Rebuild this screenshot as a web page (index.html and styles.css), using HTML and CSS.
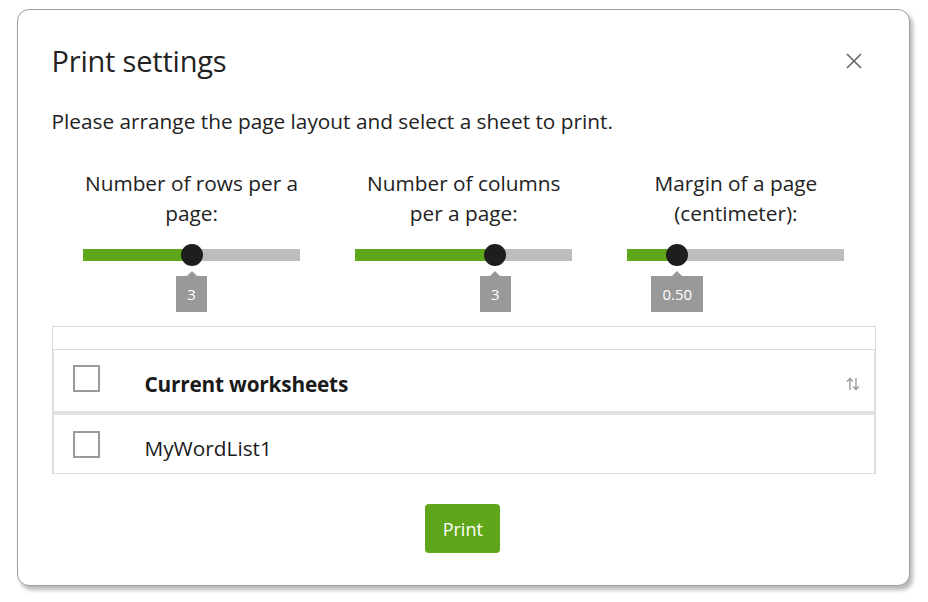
FILE: index.html
```html
<!DOCTYPE html>
<html lang="en">
<head>
<meta charset="utf-8">
<title>Print settings</title>
<link rel="stylesheet" href="styles.css">
</head>
<body>
<div class="dialog">
  <div class="header">
    <h1 class="title">Print settings</h1>
    <button class="close" aria-label="Close">
      <svg width="16" height="16" viewBox="0 0 16 16"><path d="M1 1L15 15M15 1L1 15" stroke="#666" stroke-width="1.6" fill="none"/></svg>
    </button>
  </div>
  <p class="desc">Please arrange the page layout and select a sheet to print.</p>
  <div class="sliders">
    <div class="slider-col">
      <div class="label">Number of rows per a<br>page:</div>
      <div class="track">
        <div class="fill" style="width:50%"></div>
        <div class="thumb-wrap" style="left:50%">
          <div class="thumb"></div>
          <div class="tip">3</div>
        </div>
      </div>
    </div>
    <div class="slider-col">
      <div class="label">Number of columns<br>per a page:</div>
      <div class="track">
        <div class="fill" style="width:64.5%"></div>
        <div class="thumb-wrap" style="left:64.5%">
          <div class="thumb"></div>
          <div class="tip">3</div>
        </div>
      </div>
    </div>
    <div class="slider-col">
      <div class="label">Margin of a page<br>(centimeter):</div>
      <div class="track">
        <div class="fill" style="width:23%"></div>
        <div class="thumb-wrap" style="left:23%">
          <div class="thumb"></div>
          <div class="tip">0.50</div>
        </div>
      </div>
    </div>
  </div>
  <div class="grid">
    <div class="toolbar"></div>
    <div class="row head">
      <div class="cell-check"><span class="checkbox"></span></div>
      <div class="cell-name">Current worksheets</div>
      <div class="cell-sort">
        <svg width="14" height="14" viewBox="0 0 14 14"><path d="M4 13V1.5M1 4.5L4 1.5L7 4.5M10 1V12.5M7 9.5L10 12.5L13 9.5" stroke="#9a9a9a" stroke-width="1.4" fill="none"/></svg>
      </div>
    </div>
    <div class="sep"></div>
    <div class="row">
      <div class="cell-check"><span class="checkbox"></span></div>
      <div class="cell-name normal">MyWordList1</div>
    </div>
  </div>
  <div class="footer">
    <button class="print">Print</button>
  </div>
</div>
</body>
</html>
```

FILE: styles.css
```css
* { box-sizing: border-box; }
html, body { margin: 0; padding: 0; background: #fff; }
body {
  font-family: "Open Sans", "Noto Sans", sans-serif;
  color: #222;
  width: 928px;
  height: 602px;
  overflow: hidden;
}
.dialog {
  margin: 9px 0 0 17px;
  width: 893px;
  height: 577px;
  border: 1.5px solid #9e9e9e;
  border-radius: 12px;
  background: #fff;
  box-shadow: 3px 4px 4px rgba(0,0,0,0.28);
  padding: 30px 33px 0 33.5px;
}
.header {
  display: flex;
  justify-content: space-between;
  align-items: center;
  height: 42px;
}
.title {
  margin: 0;
  font-size: 29px;
  font-weight: 400;
  line-height: 42px;
  letter-spacing: -0.2px;
  color: #222;
}
.close {
  border: 0;
  background: none;
  padding: 0;
  width: 16px;
  height: 16px;
  margin-right: 14px;
  display: flex;
}
.desc {
  margin: 25px 0 0 0;
  font-size: 20.8px;
  line-height: 28px;
  color: #222;
}
.sliders {
  display: grid;
  grid-template-columns: repeat(3, 1fr);
  margin-top: 33px;
  padding: 0 4px;
}
.slider-col {
  display: flex;
  flex-direction: column;
  align-items: center;
}
.label {
  text-align: center;
  font-size: 20.8px;
  line-height: 30px;
  color: #222;
}
.track {
  position: relative;
  width: 217px;
  height: 12px;
  background: #bdbdbd;
  margin-top: 21px;
  margin-bottom: 65px;
}
.fill {
  height: 100%;
  background: #5fa61a;
}
.thumb-wrap {
  position: absolute;
  top: -5px;
  width: 0;
  display: flex;
  flex-direction: column;
  align-items: center;
}
.thumb {
  width: 22px;
  height: 22px;
  border-radius: 50%;
  background: #1e1e1e;
  flex: none;
}
.tip {
  position: relative;
  margin-top: 10px;
  background: #999;
  color: #fff;
  font-size: 15px;
  line-height: 36px;
  height: 36px;
  min-width: 31px;
  padding: 0 11px;
  text-align: center;
  white-space: nowrap;
}
.tip::before {
  content: "";
  position: absolute;
  top: -5px;
  left: 50%;
  margin-left: -5px;
  border-left: 5px solid transparent;
  border-right: 5px solid transparent;
  border-bottom: 5px solid #999;
}
.grid {
  border: 1px solid #dcdcdc;
  width: 824px;
}
.toolbar {
  height: 23px;
  border-bottom: 1px solid #dcdcdc;
}
.row {
  display: flex;
  align-items: center;
  height: 58px;
  border-left: 1px solid #e3e3e3;
  border-right: 1px solid #e3e3e3;
}
.row.head { height: 61px; }
.sep {
  height: 4px;
  background: #e3e3e3;
}
.cell-check {
  width: 91px;
  padding-left: 19px;
  display: flex;
}
.checkbox {
  width: 27px;
  height: 27px;
  border: 2px solid #9a9a9a;
  display: block;
}
.row.head .checkbox { margin-top: -4px; }
.cell-name {
  flex: 1;
  font-size: 20.8px;
  font-weight: 700;
  letter-spacing: -0.2px;
  color: #1a1a1a;
  padding-top: 6px;
}
.cell-name.normal {
  font-weight: 400;
  letter-spacing: 0;
  padding-top: 8px;
}
.cell-sort {
  width: 40px;
  display: flex;
  padding-left: 12px;
  padding-top: 6px;
}
.footer {
  display: flex;
  justify-content: center;
  margin-top: 30px;
}
.print {
  width: 75px;
  height: 49px;
  border: 0;
  border-radius: 4px;
  background: #5fa61a;
  color: #fff;
  font-family: "Open Sans", "Noto Sans", sans-serif;
  font-size: 18px;
  padding: 0;
  margin-left: -2px;
}
```
